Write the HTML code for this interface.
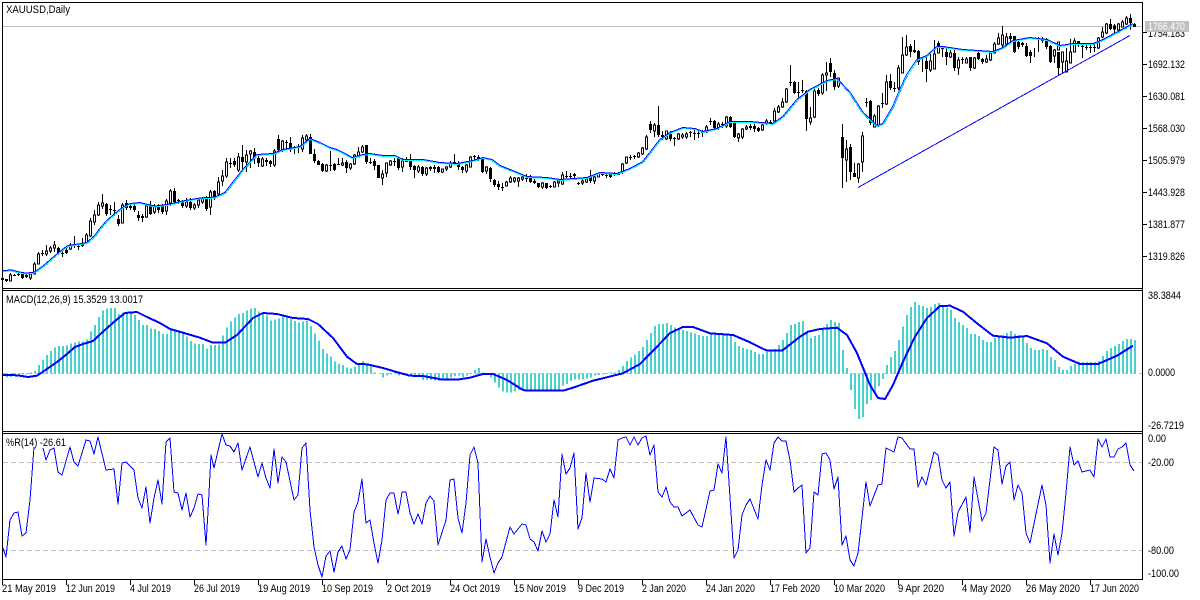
<!DOCTYPE html>
<html><head><meta charset="utf-8"><title>XAUUSD,Daily</title>
<style>html,body{margin:0;padding:0;background:#fff;width:1200px;height:600px;overflow:hidden}svg{display:block}text{font-family:"Liberation Sans",sans-serif;font-size:11px;fill:#000}</style></head>
<body>
<svg width="1200" height="600" viewBox="0 0 1200 600" xmlns="http://www.w3.org/2000/svg">
<rect width="1200" height="600" fill="#fff"/>
<g shape-rendering="crispEdges" fill="none">
<path d="M2 26.5H1142" stroke="#c0c0c0"/>
<path d="M3 373.5H1142M3 462.5H1142M3 550.5H1142" stroke="#c0c0c0" stroke-dasharray="5 3"/>
<g transform="translate(0 285) scale(1 .33333)"><path stroke="#48d1cc" stroke-width="2" d="M3 265V272M7 265V278M11 265V276M15 265V272M19 265V270M23 265V268M27 265V268M31 265V263M35 265V258M39 265V240M43 265V225M47 265V210M51 265V198M55 265V187M59 265V183M63 265V183M67 265V182M71 265V176M75 265V172M79 265V170M83 265V170M87 265V163M91 265V140M95 265V120M99 265V96M103 265V76M107 265V70M111 265V69M115 265V69M119 265V87M123 265V82M127 265V80M131 265V80M135 265V90M139 265V105M143 265V120M147 265V120M151 265V130M155 265V132M159 265V138M163 265V147M167 265V147M171 265V135M175 265V138M179 265V141M183 265V142M187 265V155M191 265V168M195 265V175M199 265V177M203 265V177M207 265V190M211 265V180M215 265V180M219 265V178M223 265V152M227 265V127M231 265V110M235 265V97M239 265V87M243 265V84M247 265V77M251 265V70M255 265V69M259 265V80M263 265V85M267 265V92M271 265V107M275 265V103M279 265V100M283 265V92M287 265V95M291 265V102M295 265V108M299 265V113M303 265V110M307 265V107M311 265V123M315 265V145M319 265V167M323 265V192M327 265V205M331 265V215M335 265V230M339 265V237M343 265V240M347 265V248M351 265V251M355 265V245M359 265V235M363 265V228M367 265V235M371 265V237M375 265V262M379 265V266M383 265V278M387 265V272M391 265V268M395 265V262M399 265V272M403 265V268M407 265V268M411 265V270M415 265V272M419 265V272M423 265V285M427 265V285M431 265V285M435 265V287M439 265V288M443 265V283M447 265V280M451 265V278M455 265V273M459 265V272M463 265V276M467 265V272M471 265V267M475 265V255M479 265V249M483 265V262M487 265V265M491 265V278M495 265V293M499 265V308M503 265V320M507 265V323M511 265V322M515 265V320M519 265V315M523 265V315M527 265V315M531 265V315M535 265V315M539 265V315M543 265V315M547 265V315M551 265V315M555 265V315M559 265V315M563 265V302M567 265V297M571 265V288M575 265V284M579 265V284M583 265V284M587 265V280M591 265V277M595 265V272M599 265V270M603 265V268M607 265V265M611 265V262M615 265V262M619 265V255M623 265V243M627 265V228M631 265V217M635 265V208M639 265V198M643 265V186M647 265V165M651 265V144M655 265V123M659 265V117M663 265V117M667 265V114M671 265V120M675 265V128M679 265V132M683 265V135M687 265V138M691 265V142M695 265V145M699 265V150M703 265V153M707 265V153M711 265V148M715 265V147M719 265V147M723 265V147M727 265V148M731 265V153M735 265V171M739 265V183M743 265V189M747 265V192M751 265V195M755 265V201M759 265V207M763 265V207M767 265V201M771 265V198M775 265V192M779 265V180M783 265V165M787 265V144M791 265V120M795 265V117M799 265V111M803 265V108M807 265V143M811 265V159M815 265V153M819 265V150M823 265V132M827 265V117M831 265V105M835 265V111M839 265V114M843 265V195M847 265V249M851 265V315M855 265V372M859 265V402M863 265V396M867 265V357M871 265V345M875 265V327M879 265V303M883 265V282M887 265V240M891 265V216M895 265V198M899 265V165M903 265V125M907 265V90M911 265V66M915 265V51M919 265V60M923 265V63M927 265V69M931 265V66M935 265V57M939 265V54M943 265V63M947 265V69M951 265V75M955 265V99M959 265V111M963 265V120M967 265V129M971 265V147M975 265V147M979 265V153M983 265V165M987 265V171M991 265V171M995 265V159M999 265V153M1003 265V150M1007 265V144M1011 265V138M1015 265V147M1019 265V150M1023 265V153M1027 265V174M1031 265V189M1035 265V195M1039 265V195M1043 265V192M1047 265V195M1051 265V216M1055 265V225M1059 265V246M1063 265V255M1067 265V255M1071 265V243M1075 265V237M1079 265V231M1083 265V231M1087 265V231M1091 265V231M1095 265V231M1099 265V228M1103 265V213M1107 265V198M1111 265V189M1115 265V183M1119 265V177M1123 265V168M1127 265V162M1131 265V162M1135 265V165"/></g>
<g transform="translate(.5 0)">
<path stroke="#000" d="M2 278V281M6 279V282M10 273V281M14 274V276M18 273V276M22 273V279M26 274V278M30 272V280M34 262V274M38 252V264M42 250V256M46 245V256M50 246V253M54 241V252M58 247V254M62 250V257M66 247V254M70 243V250M74 236V248M78 244V250M82 238V247M86 233V244M90 218V237M94 210V225M98 202V216M102 194V209M106 203V216M110 205V215M114 202V216M118 215V226M122 203V223M126 200V210M130 204V210M134 204V212M138 211V221M142 214V222M146 205V218M150 201V215M154 204V214M158 204V213M162 204V214M166 199V215M170 189V206M174 188V203M178 199V204M182 200V208M186 198V208M190 198V210M194 203V210M198 198V208M202 197V204M206 196V211M210 190V215M214 190V200M218 177V196M222 170V186M226 158V178M230 158V168M234 158V167M238 153V172M242 145V170M246 150V172M250 150V168M254 148V164M258 156V167M262 157V167M266 158V166M270 160V167M274 149V167M278 135V151M282 140V152M286 140V150M290 137V152M294 146V154M298 144V153M302 135V152M306 134V141M310 134V154M314 149V163M318 160V165M322 163V172M326 164V172M330 151V171M334 163V171M338 158V165M342 158V166M346 160V173M350 163V170M354 154V165M358 147V157M362 145V153M366 145V164M370 158V164M374 159V170M378 165V178M382 170V185M386 163V177M390 160V166M394 158V166M398 157V170M402 158V172M406 157V162M410 154V170M414 165V178M418 165V173M422 166V176M426 167V176M430 166V171M434 165V173M438 166V173M442 169V173M446 166V171M450 161V168M454 154V164M458 161V170M462 166V173M466 164V173M470 156V167M474 155V160M478 155V161M482 158V173M486 166V174M490 167V182M494 179V187M498 181V190M502 183V191M506 181V186M510 176V183M514 177V183M518 177V187M522 175V181M526 174V182M530 175V183M534 179V184M538 183V188M542 182V189M546 183V189M550 185V188M554 181V187M558 179V187M562 172V185M566 171V178M570 173V178M574 173V180M578 182V185M582 179V185M586 177V183M590 170V183M594 175V184M598 173V177M602 172V176M606 173V178M610 173V178M614 172V176M618 172V175M622 163V174M626 157V164M630 155V160M634 155V159M638 152V158M642 147V155M646 135V150M650 121V133M654 123V137M658 106V137M662 131V140M666 131V140M670 131V141M674 137V146M678 133V140M682 133V139M686 132V139M690 131V137M694 130V140M698 131V138M702 130V137M706 125V133M710 118V125M714 120V129M718 122V130M722 122V128M726 116V128M730 116V128M734 122V138M738 133V142M742 128V139M746 125V130M750 124V130M754 124V132M758 127V132M762 122V131M766 119V125M770 120V124M774 108V121M778 105V113M782 98V108M786 88V103M790 65V86M794 81V94M798 82V98M802 80V93M806 90V131M810 107V125M814 88V118M818 88V96M822 73V95M826 62V91M830 58V77M834 70V90M838 78V88M842 124V188M846 140V182M850 144V180M854 163V177M858 163V183M862 132V172M866 98V107M870 100V125M874 114V127M878 105V127M882 93V108M886 75V105M890 74V90M894 82V92M898 65V90M902 37V73M906 35V56M910 44V57M914 40V53M918 50V65M922 58V72M926 57V82M930 52V72M934 40V57M938 41V49M942 46V57M946 48V65M950 50V58M954 50V71M958 57V75M962 57V64M966 57V63M970 57V71M974 57V69M978 52V60M982 58V64M986 55V63M990 52V61M994 42V53M998 33V45M1002 26V47M1006 33V47M1010 33V42M1014 36V53M1018 39V49M1022 42V47M1026 43V57M1030 50V63M1034 48V57M1038 37V52M1042 37V43M1046 38V49M1050 45V63M1054 49V63M1058 52V75M1062 59V73M1066 48V64M1070 39V53M1074 38V47M1078 42V47M1082 43V58M1086 43V50M1090 44V53M1094 44V52M1098 37V49M1102 27V38M1106 23V34M1110 19V30M1114 24V33M1118 23V33M1122 20V27M1126 16V25M1130 14V30M1134 23V27"/>
<path stroke="#000" fill="#fff" d="M9 275h2v6h-2zM29 274h2v4h-2zM33 264h2v10h-2zM37 254h2v10h-2zM45 251h2v3h-2zM49 248h2v3h-2zM53 245h2v3h-2zM69 245h2v4h-2zM85 235h2v8h-2zM89 221h2v15h-2zM93 215h2v7h-2zM97 205h2v10h-2zM101 203h2v3h-2zM121 205h2v18h-2zM145 206h2v11h-2zM153 206h2v6h-2zM165 201h2v10h-2zM169 191h2v12h-2zM185 202h2v4h-2zM193 205h2v3h-2zM197 200h2v5h-2zM201 199h2v3h-2zM209 192h2v15h-2zM217 182h2v12h-2zM221 176h2v5h-2zM225 162h2v14h-2zM237 157h2v13h-2zM245 155h2v7h-2zM249 151h2v3h-2zM261 159h2v7h-2zM273 151h2v14h-2zM281 141h2v9h-2zM301 138h2v11h-2zM305 136h2v4h-2zM325 165h2v6h-2zM341 163h2v2h-2zM349 164h2v4h-2zM353 155h2v9h-2zM357 152h2v5h-2zM361 147h2v5h-2zM381 174h2v4h-2zM385 163h2v10h-2zM389 161h2v4h-2zM401 161h2v6h-2zM417 167h2v4h-2zM425 168h2v6h-2zM441 169h2v3h-2zM445 167h2v2h-2zM449 163h2v4h-2zM465 165h2v6h-2zM469 157h2v10h-2zM485 167h2v4h-2zM505 182h2v4h-2zM509 178h2v4h-2zM513 178h2v3h-2zM517 178h2v3h-2zM521 177h2v2h-2zM541 183h2v4h-2zM553 182h2v5h-2zM557 181h2v2h-2zM561 175h2v9h-2zM581 181h2v2h-2zM585 179h2v3h-2zM593 177h2v4h-2zM597 174h2v3h-2zM621 164h2v8h-2zM625 157h2v6h-2zM637 153h2v4h-2zM641 148h2v6h-2zM645 137h2v12h-2zM653 125h2v6h-2zM665 131h2v8h-2zM677 134h2v5h-2zM681 135h2v2h-2zM685 134h2v3h-2zM705 127h2v5h-2zM717 124h2v4h-2zM725 117h2v9h-2zM737 134h2v4h-2zM741 129h2v8h-2zM745 127h2v2h-2zM761 125h2v5h-2zM765 121h2v3h-2zM773 111h2v10h-2zM777 107h2v5h-2zM781 102h2v5h-2zM785 89h2v13h-2zM809 118h2v4h-2zM813 91h2v26h-2zM821 75h2v18h-2zM825 73h2v2h-2zM837 78h2v8h-2zM845 149h2v11h-2zM857 164h2v14h-2zM861 136h2v26h-2zM873 116h2v11h-2zM877 106h2v20h-2zM885 82h2v22h-2zM897 68h2v20h-2zM901 55h2v18h-2zM905 47h2v8h-2zM929 61h2v9h-2zM933 54h2v15h-2zM937 44h2v9h-2zM949 53h2v4h-2zM957 60h2v8h-2zM965 59h2v4h-2zM973 58h2v10h-2zM985 59h2v3h-2zM989 53h2v7h-2zM993 44h2v9h-2zM997 38h2v6h-2zM1001 35h2v10h-2zM1005 37h2v7h-2zM1053 50h2v6h-2zM1057 42h2v8h-2zM1061 52h2v10h-2zM1065 61h2v11h-2zM1069 52h2v11h-2zM1073 41h2v11h-2zM1097 38h2v10h-2zM1101 32h2v5h-2zM1105 24h2v9h-2zM1113 26h2v3h-2zM1117 24h2v6h-2zM1121 22h2v5h-2zM1125 18h2v6h-2z"/>
<path stroke="#000" stroke-width="3" d="M2 278V280M6 279V281M14 275v1M18 274v1M22 274V278M26 275V277M42 253v1M58 248V253M62 253v1M66 250V253M74 245V246M78 246v1M82 243V246M106 204V214M110 209v1M114 210v1M118 219V224M126 203V208M130 206V208M134 206V210M138 215V218M142 216V218M150 206V214M158 206V210M162 206V212M174 191V202M178 200v1M182 202V206M190 202V208M206 198V209M214 191V198M230 163v1M234 161V165M242 157V162M254 152V158M258 158V163M266 160V162M270 161V164M278 139V150M286 142v1M290 143V148M294 148v1M298 147V148M310 137V154M314 154V161M318 161V165M322 164V171M330 165v1M334 164V170M338 164v1M346 162V168M366 145V162M370 162v1M374 161V166M378 165V178M394 161v1M398 158V168M406 161v1M410 161V167M414 166V170M422 167V174M430 167V169M434 167V169M438 167V172M454 162v1M458 163V167M462 167V170M474 156v1M478 157V159M482 158V172M490 168V179M494 180V185M498 184V187M502 187v1M526 178v1M530 176V182M534 181V183M538 183V187M546 183V188M550 186v1M566 176v1M570 176v1M574 174V176M578 183V184M590 177V181M602 174v1M606 175v1M610 174V177M614 174v1M618 174v1M630 157v1M634 156V157M650 124V130M658 125V135M662 135V137M670 134V139M674 138V139M690 132v1M694 133v1M698 133v1M702 132v1M710 121v1M714 121V128M722 124v1M730 117V127M734 123V137M750 126V128M754 126V129M758 128V131M770 122v1M790 82v1M794 82V93M798 92v1M802 90v1M806 91V119M818 90V94M830 63V72M834 73V87M842 137V158M850 147V172M854 173V177M866 102v1M870 101V123M882 103v1M890 81V88M894 88v1M910 46V52M914 50V52M918 51V62M926 61V69M938 43V47M942 48V49M946 52V57M954 53V68M962 59V60M970 57V68M978 53V59M982 59V62M1010 36V39M1014 36V52M1018 42V47M1022 43V45M1026 46V56M1030 52V56M1042 40v1M1046 41V47M1050 46V62M1058 52V68M1078 44v1M1082 46V47M1086 47v1M1090 47v1M1094 47v1M1078 41V44M1110 24V29M1114 26V29M1130 18V23M1134 24V27"/>
</g>
<path stroke="#0000ff" d="M858 187.5L1130 35.5"/>
<path id="ma" stroke="#0000ff" stroke-width="2" stroke-linejoin="round" d="M3 271L12 270.5L17 272L25 273.5L33 273L37 271L45 265L53 258L60 252L68 246L75 245L87 243L95 236L100 229L107 221L115 214L123 207.5L130 204L140 203L148 205L155 206.5L170 204.5L185 201L200 198.5L215 197.5L225 193L243 170L257 155L273 154L283 150L300 147L310 139L320 143L330 148L337 150L343 153L352 158L363 155L370 154L383 156L395 156L403 160L423 160L440 163L457 164L473 161L483 158L492 160L500 166L510 170L527 177L547 178L560 180L587 178L600 173L617 174L630 169L643 162L650 153L660 140L670 133L683 128L695 129L703 132L717 129L730 122L750 122L773 124L783 117L797 100L810 90L827 81L837 79L850 93L863 113L877 126L883 124L893 107L900 90L907 75L917 60L927 56L937 47L943 47L963 50L993 52L1003 48L1013 41L1030 38L1047 40L1060 46L1073 44L1093 44L1103 40L1120 31L1133 24"/>
<path stroke="#00ffff" d="M3 271.5L12 271L17 272.5L25 274L33 273.5L37 271.5L45 265.5L53 258.5L60 252.5L68 246.5L75 245.5L87 243.5L95 236.5L100 229.5L107 221.5L115 214.5L123 208L130 204.5L140 203.5L148 205.5L155 207L170 205L185 201.5L200 199L215 198L225 193.5L243 170.5L257 155.5L273 154.5L283 150.5L300 147.5L310 139.5L320 143.5L330 148.5L337 150.5L343 153.5L352 158.5L363 155.5L370 154.5L383 156.5L395 156.5L403 160.5L423 160.5L440 163.5L457 164.5L473 161.5L483 158.5L492 160.5L500 166.5L510 170.5L527 177.5L547 178.5L560 180.5L587 178.5L600 173.5L617 174.5L630 169.5L643 162.5L650 153.5L660 140.5L670 133.5L683 128.5L695 129.5L703 132.5L717 129.5L730 122.5L750 122.5L773 124.5L783 117.5L797 100.5L810 90.5L827 81.5L837 79.5L850 93.5L863 113.5L877 126.5L883 124.5L893 107.5L900 90.5L907 75.5L917 60.5L927 56.5L937 47.5L943 47.5L963 50.5L993 52.5L1003 48.5L1013 41.5L1030 38.5L1047 40.5L1060 46.5L1073 44.5L1093 44.5L1103 40.5L1120 31.5L1133 24.5"/>
<path stroke="#0000ff" stroke-width="2" stroke-linejoin="round" d="M3 375L17 375.3L28 377L37 375.7L43 371.7L57 362L67 354L75 347L83 344L93 341L103 331.7L115 321L125 313L137 312L147 317L160 323L170 329L183 332.7L200 337.7L213 342.7L225 342.7L237 335L253 318L263 313L277 314L293 318L308 319L318 324L333 338L347 356.7L357 364L367 364.3L383 368L400 373L410 375.7L423 376L443 379.7L457 379.7L470 377.7L483 374L493 374L507 380L523 390L528 390.7L563 390.7L573 387.7L593 380.7L623 373.3L640 364L657 346.7L670 333L683 327L693 327L710 333.3L733 335L747 341L767 350.7L782 350.7L800 336.7L808 331.7L820 329L837 327.7L847 335L857 353L870 385L878 398L885 399L893 385L903 361.7L915 336.7L927 318L940 306L950 305.7L963 311.7L977 323.3L993 335.7L1010 337.7L1027 336L1047 343.3L1063 356.7L1080 364L1098 364L1117 355.7L1133 345.7"/>
<path stroke="#0000ff" stroke-linejoin="round" d="M3 548L6 557L10 520L14 513L18 512L22 536L26 533L30 500L34 447M43 448L46 460L50 450L54 448L58 472L62 475L70 447L74 462L78 466L86 440L90 441L94 454L98 437L106 470L114 469L118 504L122 463L126 462L134 470L138 498L142 508L146 487L150 523L154 498L158 480L162 504L166 442L170 438L174 492L178 493L182 510L186 493L190 517L194 508L198 494L202 495L206 545L208 512L211 455L214 468L222 434L226 445L230 446L234 452L238 443L242 470L250 447L258 477L262 463L266 478L270 488L274 449L278 483L282 457L286 462L294 500L298 495L302 448L306 443L310 510L314 547L318 565L322 577L326 556L330 551L334 572L338 552L342 546L346 559L350 550L354 512L358 502L362 479L366 523L370 520L374 543L378 563L382 540L386 500L390 493L394 493L398 514L400 505L402 492L406 492L410 513L414 524L418 514L422 524L426 503L430 496L434 501L438 545L446 520L450 480L454 479L458 518L462 533L466 503L470 455L474 447L478 463L482 562L486 539L490 557L494 573L498 563L502 557L510 527L514 534L522 524L526 525L530 539L534 542L538 551L542 531L546 542L550 534L554 500L558 517L562 454L566 474L570 468L574 453L578 529L582 518L586 473L590 502L594 478L602 479L606 482L610 469L614 478L618 440L622 438L626 437L630 445L634 437L638 445L642 438L646 436L650 455L654 445L658 492L662 497L666 487L670 502L674 507L678 507L682 516L690 510L698 525L702 527L710 491L714 490L718 464L722 473L726 437L734 558L738 550L742 515L746 505L750 499L758 519L762 485L766 460L770 470L774 443L778 437L782 441L786 441L790 460L794 492L798 488L802 485L806 553L810 548L814 492L818 495L822 454L826 453L830 460L834 489L838 477L842 545L846 536L850 560L854 566L858 553L862 518L866 482L870 506L878 485L882 484L886 448L894 452L898 437L902 438L910 449L914 449L918 487L922 477L926 485L934 452L938 455L942 480L946 488L950 482L954 536L958 512L966 497L970 532L974 477L982 521L986 513L994 447L998 450L1002 484L1006 466L1010 462L1014 500L1018 485L1022 493L1026 533L1030 543L1042 485L1046 505L1050 563L1054 534L1058 555L1062 533L1066 493L1070 447L1074 465L1078 461L1082 472L1090 470L1094 477L1098 439L1102 447L1106 439L1110 457L1114 457L1118 449L1122 447L1126 443L1130 465L1134 471"/>
<path stroke="#000" d="M2.5 2V580M1142.5 2V580M2 2.5H1143M2 288.5H1143M2 290.5H1143M2 431.5H1143M2 433.5H1143M2 579.5H1143"/>
<path stroke="#000" d="M1143 32.5h4M1143 64.5h4M1143 96.5h4M1143 128.5h4M1143 160.5h4M1143 192.5h4M1143 224.5h4M1143 256.5h4M2.5 580v5M66.5 580v5M130.5 580v5M194.5 580v5M258.5 580v5M322.5 580v5M386.5 580v5M450.5 580v5M514.5 580v5M578.5 580v5M642.5 580v5M706.5 580v5M770.5 580v5M834.5 580v5M898.5 580v5M962.5 580v5M1026.5 580v5M1090.5 580v5"/>
</g>
<text x="6" y="13" textLength="64" lengthAdjust="spacingAndGlyphs">XAUUSD,Daily</text>
<text x="6" y="303" textLength="137" lengthAdjust="spacingAndGlyphs">MACD(12,26,9) 15.3529 13.0017</text>
<text x="6" y="446" textLength="60" lengthAdjust="spacingAndGlyphs">%R(14) -26.61</text>
<g>
<text x="1148" y="37" textLength="37" lengthAdjust="spacingAndGlyphs">1754.183</text>
<text x="1148" y="68" textLength="37" lengthAdjust="spacingAndGlyphs">1692.132</text>
<text x="1148" y="100" textLength="37" lengthAdjust="spacingAndGlyphs">1630.081</text>
<text x="1148" y="132" textLength="37" lengthAdjust="spacingAndGlyphs">1568.030</text>
<text x="1148" y="164" textLength="37" lengthAdjust="spacingAndGlyphs">1505.979</text>
<text x="1148" y="196" textLength="37" lengthAdjust="spacingAndGlyphs">1443.928</text>
<text x="1148" y="228" textLength="37" lengthAdjust="spacingAndGlyphs">1381.877</text>
<text x="1148" y="260" textLength="37" lengthAdjust="spacingAndGlyphs">1319.826</text>
<rect x="1145" y="21" width="44" height="11" fill="#c0c0c0" shape-rendering="crispEdges"/>
<text x="1148" y="30" textLength="37" lengthAdjust="spacingAndGlyphs" style="fill:#fff">1766.470</text>
<text x="1148" y="299" textLength="33" lengthAdjust="spacingAndGlyphs">38.3844</text>
<text x="1148" y="376" textLength="27" lengthAdjust="spacingAndGlyphs">0.0000</text>
<text x="1148" y="429" textLength="36" lengthAdjust="spacingAndGlyphs">-26.7219</text>
<text x="1148" y="442" textLength="18" lengthAdjust="spacingAndGlyphs">0.00</text>
<text x="1148" y="466" textLength="26" lengthAdjust="spacingAndGlyphs">-20.00</text>
<text x="1148" y="554" textLength="26" lengthAdjust="spacingAndGlyphs">-80.00</text>
<text x="1148" y="577" textLength="31" lengthAdjust="spacingAndGlyphs">-100.00</text>
</g>
<g>
<text x="2" y="592" textLength="54" lengthAdjust="spacingAndGlyphs">21 May 2019</text>
<text x="66" y="592" textLength="49" lengthAdjust="spacingAndGlyphs">12 Jun 2019</text>
<text x="130" y="592" textLength="41" lengthAdjust="spacingAndGlyphs">4 Jul 2019</text>
<text x="194" y="592" textLength="46" lengthAdjust="spacingAndGlyphs">26 Jul 2019</text>
<text x="258" y="592" textLength="52" lengthAdjust="spacingAndGlyphs">19 Aug 2019</text>
<text x="322" y="592" textLength="51" lengthAdjust="spacingAndGlyphs">10 Sep 2019</text>
<text x="387" y="592" textLength="44" lengthAdjust="spacingAndGlyphs">2 Oct 2019</text>
<text x="450" y="592" textLength="50" lengthAdjust="spacingAndGlyphs">24 Oct 2019</text>
<text x="514" y="592" textLength="52" lengthAdjust="spacingAndGlyphs">15 Nov 2019</text>
<text x="578" y="592" textLength="46" lengthAdjust="spacingAndGlyphs">9 Dec 2019</text>
<text x="642" y="592" textLength="44" lengthAdjust="spacingAndGlyphs">2 Jan 2020</text>
<text x="706" y="592" textLength="49" lengthAdjust="spacingAndGlyphs">24 Jan 2020</text>
<text x="770" y="592" textLength="50" lengthAdjust="spacingAndGlyphs">17 Feb 2020</text>
<text x="834" y="592" textLength="51" lengthAdjust="spacingAndGlyphs">10 Mar 2020</text>
<text x="898" y="592" textLength="46" lengthAdjust="spacingAndGlyphs">9 Apr 2020</text>
<text x="962" y="592" textLength="49" lengthAdjust="spacingAndGlyphs">4 May 2020</text>
<text x="1026" y="592" textLength="54" lengthAdjust="spacingAndGlyphs">26 May 2020</text>
<text x="1090" y="592" textLength="49" lengthAdjust="spacingAndGlyphs">17 Jun 2020</text>
</g>
</svg>
</body></html>
